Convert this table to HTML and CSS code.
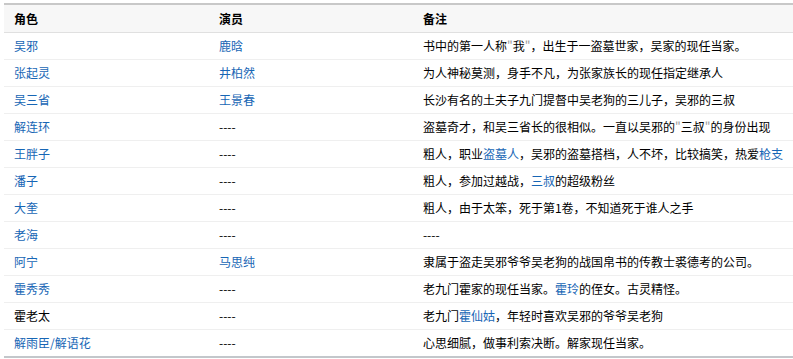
FILE: index.html
```html
<!DOCTYPE html>
<html lang="zh-CN">
<head>
    <meta charset="UTF-8">
    <title>角色表</title>
    <link rel="stylesheet" href="styles.css">
</head>
<body>
    <table class="cast">
        <thead>
            <tr>
                <th class="col-role">角色</th>
                <th class="col-actor">演员</th>
                <th>备注</th>
            </tr>
        </thead>
        <tbody>
            <tr>
                <td><a href="#">吴邪</a></td>
                <td><a href="#">鹿晗</a></td>
                <td>书中的第一人称<span class="quote">"</span>我<span class="quote">"</span>，出生于一盗墓世家，吴家的现任当家。</td>
            </tr>
            <tr>
                <td><a href="#">张起灵</a></td>
                <td><a href="#">井柏然</a></td>
                <td>为人神秘莫测，身手不凡，为张家族长的现任指定继承人</td>
            </tr>
            <tr>
                <td><a href="#">吴三省</a></td>
                <td><a href="#">王景春</a></td>
                <td>长沙有名的土夫子九门提督中吴老狗的三儿子，吴邪的三叔</td>
            </tr>
            <tr>
                <td><a href="#">解连环</a></td>
                <td>----</td>
                <td>盗墓奇才，和吴三省长的很相似。一直以吴邪的<span class="quote">"</span>三叔<span class="quote">"</span>的身份出现</td>
            </tr>
            <tr>
                <td><a href="#">王胖子</a></td>
                <td>----</td>
                <td>粗人，职业<a href="#">盗墓人</a>，吴邪的盗墓搭档，人不坏，比较搞笑，热爱<a href="#">枪支</a></td>
            </tr>
            <tr>
                <td><a href="#">潘子</a></td>
                <td>----</td>
                <td>粗人，参加过越战，<a href="#">三叔</a>的超级粉丝</td>
            </tr>
            <tr>
                <td><a href="#">大奎</a></td>
                <td>----</td>
                <td>粗人，由于太笨，死于第1卷，不知道死于谁人之手</td>
            </tr>
            <tr>
                <td><a href="#">老海</a></td>
                <td>----</td>
                <td>----</td>
            </tr>
            <tr>
                <td><a href="#">阿宁</a></td>
                <td><a href="#">马思纯</a></td>
                <td>隶属于盗走吴邪爷爷吴老狗的战国帛书的传教士裘德考的公司。</td>
            </tr>
            <tr>
                <td><a href="#">霍秀秀</a></td>
                <td>----</td>
                <td>老九门霍家的现任当家。<a href="#">霍玲</a>的侄女。古灵精怪。</td>
            </tr>
            <tr>
                <td>霍老太</td>
                <td>----</td>
                <td>老九门<a href="#">霍仙姑</a>，年轻时喜欢吴邪的爷爷吴老狗</td>
            </tr>
            <tr>
                <td><a href="#">解雨臣/解语花</a></td>
                <td>----</td>
                <td>心思细腻，做事利索决断。解家现任当家。</td>
            </tr>
        </tbody>
    </table>
</body>
</html>
```

FILE: styles.css
```css
body {
    margin: 0;
    padding: 3px 0 0 4px;
    background-color: #fff;
    font-family: "Noto Sans CJK SC", "Liberation Sans", sans-serif;
    font-size: 12px;
    color: #000;
}
.cast {
    width: 789px;
    border-collapse: collapse;
    border-top: 2px solid #c8c8c8;
    border-bottom: 2px solid #c3c7cb;
}
.cast th,
.cast td {
    height: 26px;
    padding: 0 10px;
    text-align: left;
    vertical-align: middle;
    line-height: 14px;
    white-space: nowrap;
}
.cast th {
    height: 27px;
    background-color: #f7f7f7;
    border-bottom: 1px solid #e0e0e0;
    font-weight: bold;
}
.cast td {
    border-bottom: 1px solid #efefef;
}
.cast tbody tr:last-child td {
    border-bottom: none;
}
.col-role {
    width: 185px;
}
.col-actor {
    width: 184px;
}
.quote {
    color: #999;
}
a {
    color: #1766b5;
    text-decoration: none;
}
```
